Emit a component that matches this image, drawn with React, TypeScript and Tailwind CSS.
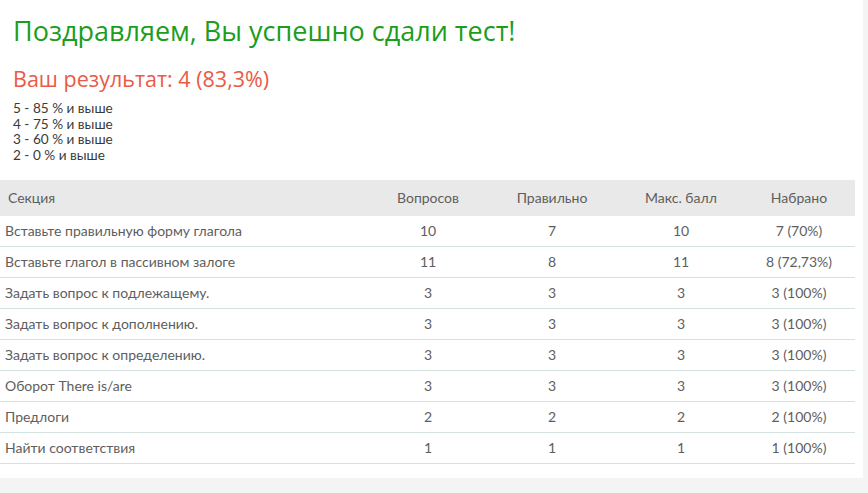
const rows = [
  ["Вставьте правильную форму глагола", "10", "7", "10", "7 (70%)"],
  ["Вставьте глагол в пассивном залоге", "11", "8", "11", "8 (72,73%)"],
  ["Задать вопрос к подлежащему.", "3", "3", "3", "3 (100%)"],
  ["Задать вопрос к дополнению.", "3", "3", "3", "3 (100%)"],
  ["Задать вопрос к определению.", "3", "3", "3", "3 (100%)"],
  ["Оборот There is/are", "3", "3", "3", "3 (100%)"],
  ["Предлоги", "2", "2", "2", "2 (100%)"],
  ["Найти соответствия", "1", "1", "1", "1 (100%)"],
];

const grades = ["5 - 85 % и выше", "4 - 75 % и выше", "3 - 60 % и выше", "2 - 0 % и выше"];

const cols = "grid grid-cols-[371px_114px_134px_124px_112px]";

export default function App() {
  return (
    <div className="min-h-screen bg-[#f4f4f4] font-['Lato',sans-serif]">
      <div className="w-[863px] h-[478px] bg-white">
        <div className="px-[13px] pt-[13px]">
          <h1 className="text-[27px] leading-[36px] text-[#1c9d1c] font-['Source_Sans_Pro','Open_Sans',sans-serif]">
            Поздравляем, Вы успешно сдали тест!
          </h1>
          <h2 className="mt-[16px] text-[21.5px] leading-[28px] text-[#ea5a45] font-['Source_Sans_Pro','Open_Sans',sans-serif]">
            Ваш результат: 4 (83,3%)
          </h2>
          <div className="mt-[8px] text-[13.6px] leading-[15.5px] text-[#3a3a3a]">
            {grades.map((g) => (
              <div key={g}>{g}</div>
            ))}
          </div>
        </div>
        <div className="mt-[17px] w-[855px] text-[14px] text-[#5e5e5e]">
          <div className={`${cols} h-[36px] items-center bg-[#e9e9e9] pb-[2px]`}>
            <div className="pl-[8px]">Секция</div>
            <div className="text-center">Вопросов</div>
            <div className="text-center">Правильно</div>
            <div className="text-center">Макс. балл</div>
            <div className="text-center">Набрано</div>
          </div>
          {rows.map((r) => (
            <div key={r[0]} className={`${cols} h-[31px] items-center border-b border-[#d3e2df] pb-[2px]`}>
              <div className="pl-[5px]">{r[0]}</div>
              <div className="text-center">{r[1]}</div>
              <div className="text-center">{r[2]}</div>
              <div className="text-center">{r[3]}</div>
              <div className="text-center">{r[4]}</div>
            </div>
          ))}
        </div>
      </div>
    </div>
  );
}
